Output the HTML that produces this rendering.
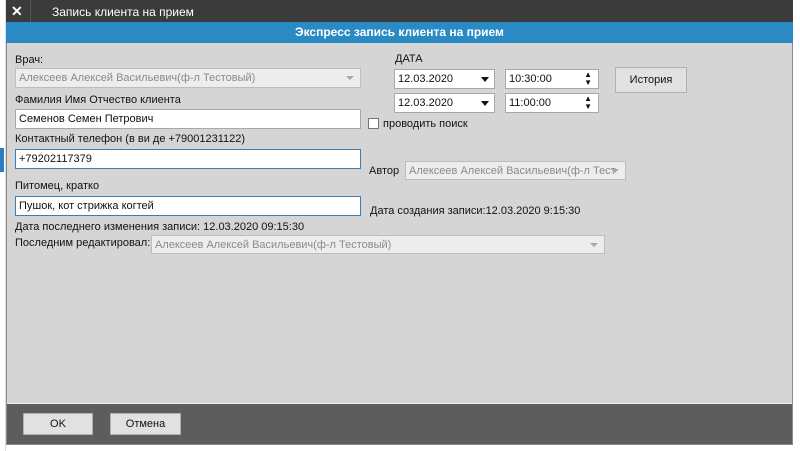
<!DOCTYPE html>
<html><head><meta charset="utf-8"><style>
*{margin:0;padding:0;box-sizing:border-box}
body{width:800px;height:451px;background:#fff;position:relative;overflow:hidden;font-family:"Liberation Sans",sans-serif;font-size:11px;color:#111}
.a{position:absolute;white-space:nowrap}
.inp{position:absolute;height:20px;background:#fff;border:1px solid #a8a8a8;padding:2px 3px;font-size:11px;line-height:14px;overflow:hidden}
.dis{background:#ededed;color:#8a8a8a;border-color:#bdbdbd}
.blue{border-color:#3a7db5}
.arr{position:absolute;right:6px;top:7px;width:0;height:0;border-left:4px solid transparent;border-right:4px solid transparent;border-top:4px solid #a8a8a8}
.darr{position:absolute;right:5px;top:7px;width:0;height:0;border-left:4px solid transparent;border-right:4px solid transparent;border-top:5px solid #111}
.btn{position:absolute;background:#e1e1e1;border:1px solid #b0b0b0;text-align:center;font-size:11px}
</style></head><body>
<div class="a" style="left:0;top:0;width:6px;height:451px;background:#fff;border-right:1px solid #ddd"></div>
<div class="a" style="left:0;top:148px;width:4px;height:24px;background:#2a7fc2"></div>
<div class="a" style="left:6px;top:0;width:787px;height:445px;background:#d5d5d5;border:1px solid #8a8a8a"></div>
<div class="a" style="left:6px;top:0;width:787px;height:22px;background:#3b3b3b"></div>
<div class="a" style="left:11px;top:3px;color:#fff;font-size:14px;font-weight:bold">✕</div>
<div class="a" style="left:30px;top:0;width:1px;height:22px;background:#555"></div>
<div class="a" style="left:52px;top:5px;color:#fff;font-size:12px">Запись клиента на прием</div>
<div class="a" style="left:6px;top:22px;width:787px;height:21px;background:#2a8bc4;color:#fff;font-weight:bold;text-align:center;line-height:21px;font-size:12px">Экспресс запись клиента на прием</div>

<div class="a" style="left:15px;top:54px">Врач:</div>
<div class="inp dis" style="left:15px;top:68px;width:346px">Алексеев Алексей Васильевич(ф-л Тестовый)<span class="arr"></span></div>
<div class="a" style="left:15px;top:94px">Фамилия Имя Отчество клиента</div>
<div class="inp" style="left:15px;top:109px;width:346px">Семенов Семен Петрович</div>
<div class="a" style="left:15px;top:133px">Контактный телефон (в ви де +79001231122)</div>
<div class="inp blue" style="left:15px;top:149px;width:346px">+79202117379</div>
<div class="a" style="left:15px;top:180px">Питомец, кратко</div>
<div class="inp blue" style="left:15px;top:196px;width:346px">Пушок, кот стрижка когтей</div>
<div class="a" style="left:15px;top:221px">Дата последнего изменения записи: 12.03.2020 09:15:30</div>
<div class="a" style="left:15px;top:237px">Последним редактировал:</div>
<div class="inp dis" style="left:151px;top:235px;width:454px;height:19px">Алексеев Алексей Васильевич(ф-л Тестовый)<span class="arr"></span></div>

<div class="a" style="left:395px;top:53px">ДАТА</div>
<div class="inp" style="left:394px;top:69px;width:101px">12.03.2020<span class="darr"></span></div>
<div class="inp" style="left:505px;top:69px;width:94px">10:30:00<span class="a" style="right:6px;top:1px;font-size:8px;line-height:8px">▲<br>▼</span></div>
<div class="inp" style="left:394px;top:93px;width:101px">12.03.2020<span class="darr"></span></div>
<div class="inp" style="left:505px;top:93px;width:94px">11:00:00<span class="a" style="right:6px;top:1px;font-size:8px;line-height:8px">▲<br>▼</span></div>
<div class="btn" style="left:615px;top:67px;width:72px;height:26px;line-height:24px">История</div>
<div class="a" style="left:368px;top:118px;width:11px;height:11px;background:#fff;border:1px solid #777"></div>
<div class="a" style="left:383px;top:118px">проводить поиск</div>
<div class="a" style="left:369px;top:165px">Автор</div>
<div class="inp dis" style="left:405px;top:161px;width:221px;height:19px">Алексеев Алексей Васильевич(ф-л Тест<span class="arr"></span></div>
<div class="a" style="left:370px;top:205px">Дата создания записи:12.03.2020 9:15:30</div>

<div class="a" style="left:7px;top:403px;width:785px;height:41px;background:#5d5d5d;border-top:1px solid #eee"></div>
<div class="btn" style="left:23px;top:413px;width:70px;height:22px;line-height:20px">OK</div>
<div class="btn" style="left:110px;top:413px;width:71px;height:22px;line-height:20px">Отмена</div>
</body></html>
